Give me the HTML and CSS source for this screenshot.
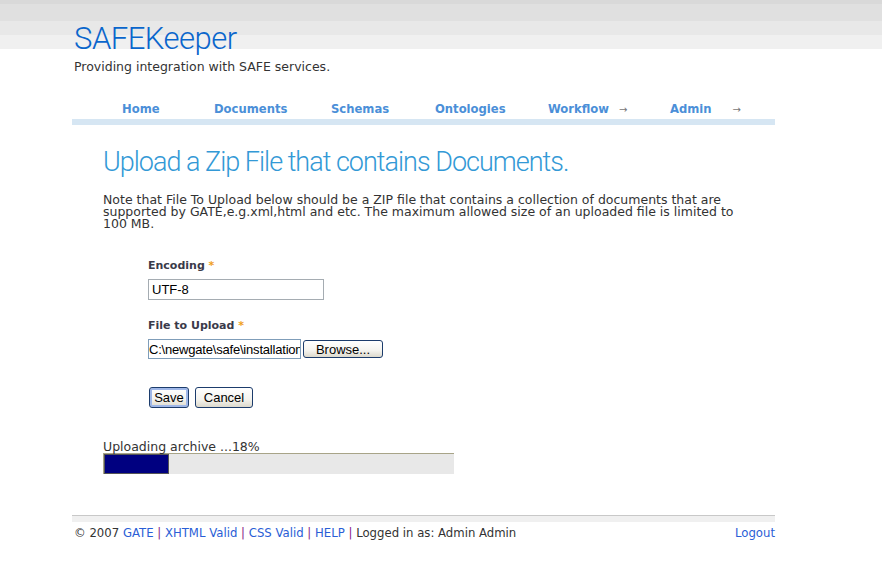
FILE: index.html
```html
<!DOCTYPE html>
<html>
<head>
<meta charset="utf-8">
<title>SAFEKeeper</title>
<link rel="stylesheet" href="styles.css">
</head>
<body>
<div class="header">
  <div class="wrap">
    <h1 class="logo">SAFEKeeper</h1>
    <p class="tagline">Providing integration with SAFE services.</p>
    <ul class="nav">
      <li class="nav-home"><a href="#">Home</a></li>
      <li class="nav-docs"><a href="#">Documents</a></li>
      <li class="nav-schemas"><a href="#">Schemas</a></li>
      <li class="nav-onto"><a href="#">Ontologies</a></li>
      <li class="nav-work"><a href="#">Workflow</a><span class="arrow">&rarr;</span></li>
      <li class="nav-admin"><a href="#">Admin</a><span class="arrow arrow-admin">&rarr;</span></li>
    </ul>
  </div>
</div>
<div class="wrap content">
  <h2 class="page-title">Upload a Zip File that contains Documents.</h2>
  <p class="note">Note that File To Upload below should be a ZIP file that contains a collection of documents that are supported by GATE,e.g.xml,html and etc. The maximum allowed size of an uploaded file is limited to 100 MB.</p>
  <form class="form">
    <label class="field-label">Encoding <span class="req">*</span></label>
    <input class="text-input" type="text" value="UTF-8">
    <label class="field-label file-label">File to Upload <span class="req">*</span></label>
    <div class="file-row">
      <input class="file-input" type="text" value="C:\newgate\safe\installation\docs.zip">
      <button type="button" class="btn browse">Browse...</button>
    </div>
    <div class="actions">
      <button type="button" class="btn save">Save</button>
      <button type="button" class="btn cancel">Cancel</button>
    </div>
  </form>
  <div class="progress-label">Uploading archive ...18%</div>
  <div class="progress"><div class="progress-fill" style="width:18.5%"></div></div>
</div>
<div class="wrap footer">
  <div class="footer-left">&copy; 2007 <a href="#">GATE</a> <span class="sep">|</span> <a href="#">XHTML Valid</a> <span class="sep">|</span> <a href="#">CSS Valid</a> <span class="sep">|</span> <a href="#">HELP</a> <span class="sep">|</span> Logged in as: Admin Admin</div>
  <a class="logout" href="#">Logout</a>
</div>
</body>
</html>
```
FILE: styles.css
```css
html, body {
  margin: 0;
  padding: 0;
  background: #fff;
  font-family: "DejaVu Sans", Verdana, sans-serif;
  color: #333;
}
a { text-decoration: none; }

.header {
  background: linear-gradient(#d9d9d9 0, #d9d9d9 4px, #e0e0e0 4px, #e0e0e0 21px, #e8e8e8 21px, #e8e8e8 35px, #f0f0f0 35px, #f0f0f0 49px, #fff 49px);
  padding-top: 20px;
}
.wrap {
  margin-left: 72px;
  width: 703px;
}
.logo {
  margin: 0 0 0 2px;
  font-family: Roboto, sans-serif;
  font-weight: 300;
  font-size: 31px;
  line-height: 38px;
  color: #0a66cc;
  letter-spacing: -0.5px;
}
.tagline {
  margin: 1px 0 0 2px;
  font-size: 12.5px;
  line-height: 16px;
  color: #333;
}
.nav {
  list-style: none;
  margin: 21px 0 0 0;
  padding: 2px 0 0 50px;
  display: flex;
  height: 21px;
  align-items: center;
  border-bottom: 6px solid #d6e6f3;
}
.nav li { font-size: 11.6px; font-weight: bold; }
.nav a { color: #4b8fd8; }
.nav .arrow { color: #777; font-weight: normal; font-size: 10px; margin-left: 10px; }
.nav .arrow-admin { margin-left: 21px; }
.nav-home { width: 92px; }
.nav-docs { width: 117px; }
.nav-schemas { width: 104px; }
.nav-onto { width: 113px; }
.nav-work { width: 122px; }

.content { padding-left: 31px; width: 672px; }
.page-title {
  margin: 20px 0 0 0;
  font-family: Roboto, sans-serif;
  font-weight: 300;
  font-size: 27px;
  line-height: 34px;
  color: #3399d6;
  letter-spacing: -1px;
}
.note {
  margin: 15px 0 0 0;
  width: 632px;
  font-size: 12.5px;
  line-height: 12px;
  color: #333;
}
.form {
  margin: 29px 0 0 45px;
  display: flex;
  flex-direction: column;
  align-items: flex-start;
}
.field-label {
  font-size: 11px;
  font-weight: bold;
  color: #3a3a4a;
  line-height: 14px;
}
.req { color: #f0a020; }
.text-input {
  margin-top: 6px;
  width: 176px;
  height: 21px;
  box-sizing: border-box;
  border: 1px solid #a5acb2;
  padding: 1px 3px;
  font-family: "Liberation Sans", Arial, sans-serif;
  font-size: 13px;
  color: #000;
  outline: none;
}
.file-label { margin-top: 19px; }
.file-row {
  margin-top: 6px;
  display: flex;
  align-items: center;
  gap: 2px;
}
.file-input {
  width: 153px;
  height: 20px;
  box-sizing: border-box;
  border: 1px solid #7f9db9;
  padding: 1px 0;
  font-family: "Liberation Sans", Arial, sans-serif;
  font-size: 13px;
  color: #000;
  outline: none;
  letter-spacing: -0.2px;
}
.btn {
  font-family: "Liberation Sans", Arial, sans-serif;
  font-size: 13px;
  color: #000;
  border: 1px solid #1c3c6c;
  border-radius: 3px;
  background: linear-gradient(#ffffff, #f4f3ee 60%, #dcd9cc);
  padding: 0;
  line-height: 15px;
}
.browse { width: 80px; height: 18px; }
.actions {
  margin-top: 28px;
  display: flex;
  gap: 6px;
  margin-left: 1px;
}
.save { width: 40px; height: 21px; box-shadow: inset 0 0 0 2px #9fb7e8; }
.cancel { width: 58px; height: 21px; }

.progress-label {
  margin-top: 33px;
  font-size: 12.5px;
  line-height: 12px;
  color: #333;
}
.progress {
  width: 351px;
  height: 21px;
  box-sizing: border-box;
  background: #e8e8e8;
  border-top: 1px solid #a8a488;
  border-left: 1px solid #a8a488;
}
.progress-fill {
  height: 100%;
  background: #000080;
  border: 1px solid #555;
  box-sizing: border-box;
}

.footer {
  margin-top: 41px;
  border-top: 1px solid #c8c8c8;
  padding-top: 6px;
  background: linear-gradient(#f0f0f0 0, #f0f0f0 6px, #fff 6px);
  display: flex;
  justify-content: space-between;
  align-items: center;
  font-size: 11.7px;
  line-height: 22px;
  color: #333;
  padding-left: 2px;
  box-sizing: border-box;
}
.footer a { color: #2a5ed6; }
.footer .sep { color: #882288; }
.logout { color: #2a5ed6; }
```
